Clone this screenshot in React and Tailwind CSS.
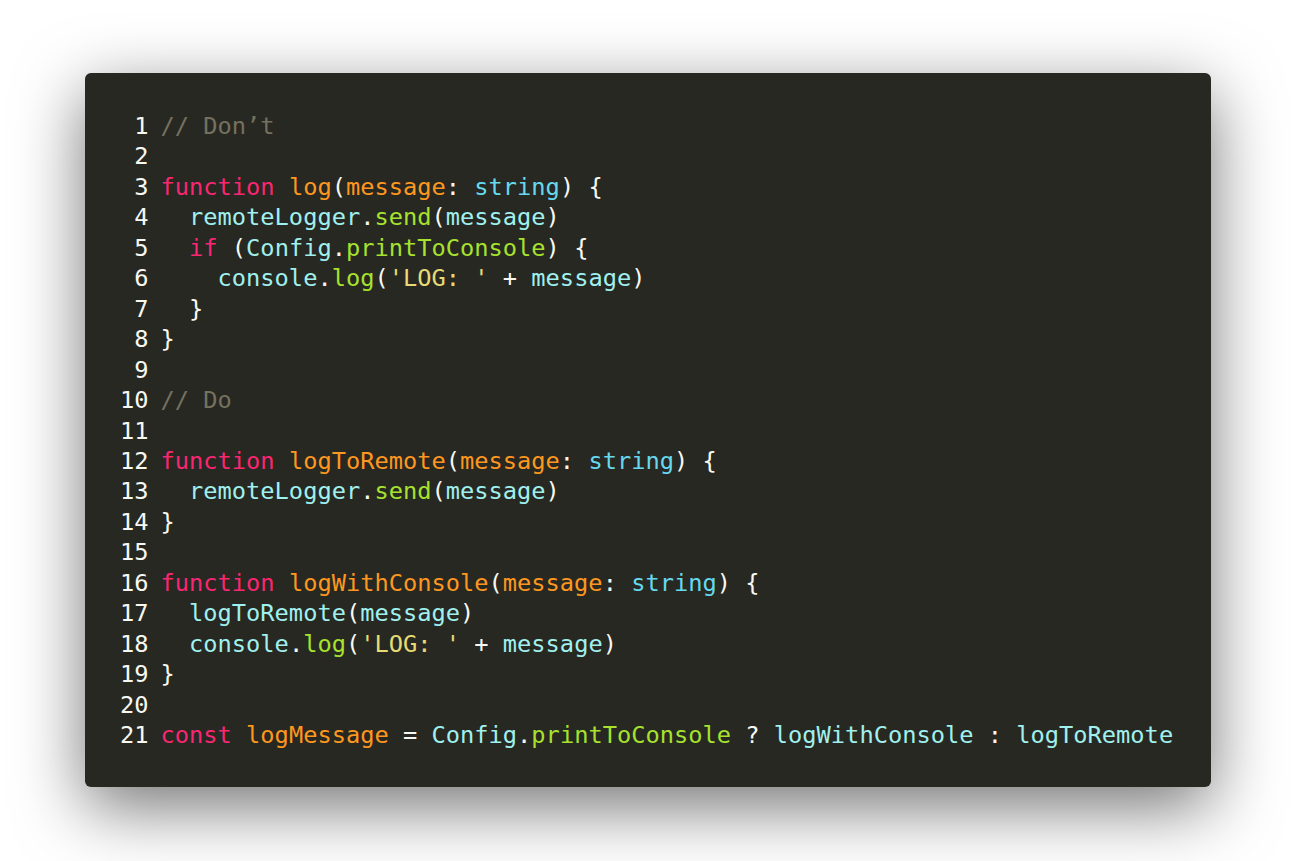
const C = {
  cm: 'text-[#75715e]',
  kw: 'text-[#f92672]',
  fn: 'text-[#fd971f]',
  ty: 'text-[#66d9ef]',
  v: 'text-[#a0f0ee]',
  m: 'text-[#a6e22e]',
  s: 'text-[#e6db74]',
  p: 'text-[#f8f8f2]',
}

const lines = [
  [['cm', '// Don’t']],
  [],
  [['kw', 'function'], ['p', ' '], ['fn', 'log'], ['p', '('], ['fn', 'message'], ['p', ': '], ['ty', 'string'], ['p', ') {']],
  [['p', '  '], ['v', 'remoteLogger'], ['p', '.'], ['m', 'send'], ['p', '('], ['v', 'message'], ['p', ')']],
  [['p', '  '], ['kw', 'if'], ['p', ' ('], ['v', 'Config'], ['p', '.'], ['m', 'printToConsole'], ['p', ') {']],
  [['p', '    '], ['v', 'console'], ['p', '.'], ['m', 'log'], ['p', '('], ['s', "'LOG: '"], ['p', ' + '], ['v', 'message'], ['p', ')']],
  [['p', '  }']],
  [['p', '}']],
  [],
  [['cm', '// Do']],
  [],
  [['kw', 'function'], ['p', ' '], ['fn', 'logToRemote'], ['p', '('], ['fn', 'message'], ['p', ': '], ['ty', 'string'], ['p', ') {']],
  [['p', '  '], ['v', 'remoteLogger'], ['p', '.'], ['m', 'send'], ['p', '('], ['v', 'message'], ['p', ')']],
  [['p', '}']],
  [],
  [['kw', 'function'], ['p', ' '], ['fn', 'logWithConsole'], ['p', '('], ['fn', 'message'], ['p', ': '], ['ty', 'string'], ['p', ') {']],
  [['p', '  '], ['v', 'logToRemote'], ['p', '('], ['v', 'message'], ['p', ')']],
  [['p', '  '], ['v', 'console'], ['p', '.'], ['m', 'log'], ['p', '('], ['s', "'LOG: '"], ['p', ' + '], ['v', 'message'], ['p', ')']],
  [['p', '}']],
  [],
  [['kw', 'const'], ['p', ' '], ['fn', 'logMessage'], ['p', ' = '], ['v', 'Config'], ['p', '.'], ['m', 'printToConsole'], ['p', ' ? '], ['v', 'logWithConsole'], ['p', ' : '], ['v', 'logToRemote']],
]

export default function App() {
  return (
    <div className="w-[1296px] h-[861px] bg-white overflow-hidden">
      <div className="pt-[73px] pl-[85px]">
        <div className="w-[1126px] h-[714px] bg-[#272822] rounded-[6px] shadow-[0_20px_68px_rgba(0,0,0,0.55)] pt-[38px] pl-[35px] font-['DejaVu_Sans_Mono',monospace] text-[23.7px] leading-[30.45px] whitespace-pre">
          {lines.map((toks, i) => (
            <div key={i} className="flex">
              <span className="w-[2ch] text-right text-[#f8f8f2]">{i + 1}</span>
              <span className="ml-[12px]">
                {toks.map(([k, t], j) => (
                  <span key={j} className={C[k]}>{t}</span>
                ))}
              </span>
            </div>
          ))}
        </div>
      </div>
    </div>
  )
}
